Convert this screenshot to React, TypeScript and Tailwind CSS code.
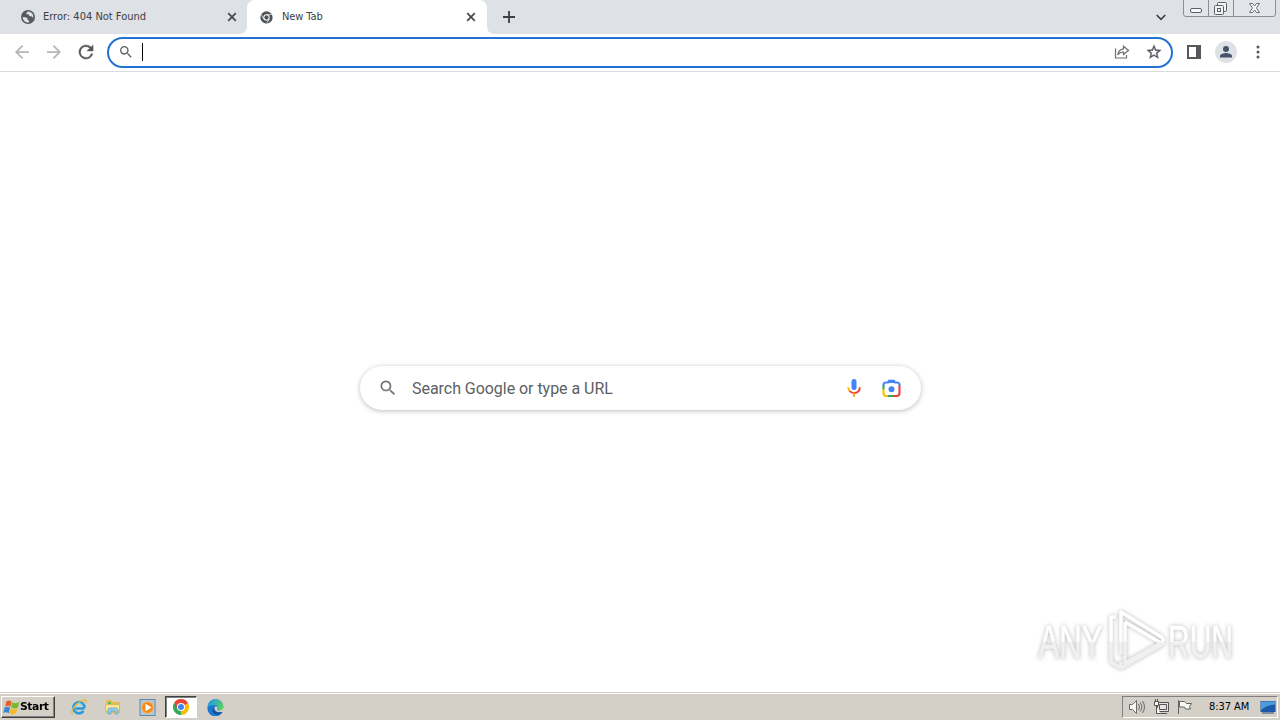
import type { ReactNode } from "react";

function MagnifierIcon({ size, color = "#5f6368" }: { size: number; color?: string }) {
  return (
    <svg width={size} height={size} viewBox="0 0 24 24" fill={color}>
      <path d="M15.5 14h-.79l-.28-.27A6.47 6.47 0 0 0 16 9.5 6.5 6.5 0 1 0 9.5 16c1.61 0 3.09-.59 4.23-1.57l.27.28v.79l5 4.99L20.49 19l-4.99-5zm-6 0C7.01 14 5 11.99 5 9.5S7.01 5 9.5 5 14 7.01 14 9.5 11.99 14 9.5 14z" />
    </svg>
  );
}

function CloseIcon() {
  return (
    <svg width="10" height="10" viewBox="0 0 10 10" stroke="#45484d" strokeWidth="1.7">
      <path d="M1.2 1.2l7.6 7.6M8.8 1.2L1.2 8.8" />
    </svg>
  );
}

function GlobeIcon() {
  return (
    <svg width="14" height="14" viewBox="0 0 14 14">
      <circle cx="7" cy="7" r="7" fill="#56595e" />
      <path d="M1.5 7.2c2.3-.1 4.1-.1 4.9 1 .5.8-.2 1.3.3 1.8.5.4 1.5.2 1.4 1.2l-.3 1.2A5.6 5.6 0 0 1 1.5 7.2z" fill="#dee1e6" />
      <path d="M5.2 3.8c0-1 1-1.1 1.3-2.3a5.5 5.5 0 0 1 5.9 6.4c-.8-.2-.8-1.2-1.7-1.5-.8-.3-1.6.2-2.3-.4-.7-.5-.2-1.4-1-1.7-.8-.2-2.2.5-2.2-.5z" fill="#dee1e6" />
    </svg>
  );
}

function ChromeGreyIcon() {
  return (
    <svg width="13" height="13" viewBox="0 0 14 14">
      <circle cx="7" cy="7" r="6.6" fill="#505358" />
      <circle cx="7" cy="7" r="3.4" fill="#fff" />
      <circle cx="7" cy="7" r="2.3" fill="#505358" />
      <path d="M7 3.8h5.6M4.1 8.7L1.4 4M10 8.7l-2.800 4.800" stroke="#fff" strokeWidth=".7" />
    </svg>
  );
}

function ChromeIcon() {
  return (
    <svg width="16" height="16" viewBox="0 0 48 48">
      <path d="M24 24L3.2 12A24 24 0 0 1 44.8 12z" fill="#ea4335" />
      <path d="M24 24L44.8 12A24 24 0 0 1 24 48z" fill="#fbbc05" />
      <path d="M24 24v24A24 24 0 0 1 3.2 12z" fill="#34a853" />
      <path d="M24 12h20.8L34.4 18zM13.6 30L3.2 12 13.6 18z" fill="#ea4335" />
      <path d="M34.4 30L24 48v-12z" fill="#fbbc05" />
      <circle cx="24" cy="24" r="12" fill="#fff" />
      <circle cx="24" cy="24" r="9" fill="#4285f4" />
    </svg>
  );
}

function WindowButtons() {
  return (
    <svg width="93" height="17" viewBox="0 0 93 17" fill="none">
      <path d="M.5 0v14q0 2.500 2.500 2.500h87q2.500 0 2.500-2.500V0" fill="#e2e5e9" stroke="#8b8f96" />
      <path d="M25.500 0v16M50.500 0v16" stroke="#8b8f96" />
      <rect x="7.500" y="8.500" width="11" height="4" rx="1.500" fill="#f8f8f8" stroke="#5b5f66" />
      <rect x="34.500" y="2.500" width="9" height="9" rx="1" fill="#f3f3f3" stroke="#5b5f66" />
      <rect x="31.500" y="5.500" width="9" height="9" rx="1" fill="#f3f3f3" stroke="#5b5f66" />
      <rect x="34.500" y="8.500" width="3" height="3" stroke="#5b5f66" />
      <path d="M66.500 3.500h3l2 2.500 2-2.500h3l-3 4.500 3 4.500h-3l-2-2.500-2 2.500h-3l3-4.500z" fill="#f5f5f5" stroke="#6a6e75" />
    </svg>
  );
}

function TabStrip() {
  return (
    <div className="flex h-[34px] shrink-0 bg-[#dee1e6] text-[11px] text-[#3c4043]">
      <div className="flex w-[247px] items-center pr-[10px] pl-[21px]">
        <GlobeIcon />
        <span className="ml-2 flex-1 pt-px whitespace-nowrap">Error: 404 Not Found</span>
        <CloseIcon />
      </div>
      <div className="relative flex w-[240px] items-center rounded-t-lg bg-white pr-[11px] pl-[13px]">
        <svg className="absolute bottom-0 -left-2" width="8" height="8" fill="#fff">
          <path d="M8 0v8H0q8 0 8-8z" />
        </svg>
        <svg className="absolute -right-2 bottom-0" width="8" height="8" fill="#fff">
          <path d="M0 0v8h8q-8 0-8-8z" />
        </svg>
        <ChromeGreyIcon />
        <span className="ml-[9px] flex-1 pt-px tracking-[-0.1px]">New Tab</span>
        <CloseIcon />
      </div>
      <div className="flex items-center pl-4">
        <svg width="12" height="12" viewBox="0 0 12 12" stroke="#3c4043" strokeWidth="1.8">
          <path d="M6 0v12M0 6h12" />
        </svg>
      </div>
      <div className="ml-auto flex items-center">
        <svg width="10" height="7" viewBox="0 0 10 7" fill="none" stroke="#3c4043" strokeWidth="1.7">
          <path d="M.7 1L5 5.300 9.300 1" />
        </svg>
        <div className="mr-1 ml-[17px] self-start">
          <WindowButtons />
        </div>
      </div>
    </div>
  );
}

function Toolbar() {
  return (
    <div className="flex h-[38px] shrink-0 items-center border-b border-[#dadce0] bg-white pb-px pl-[15px]">
      <svg width="14" height="14" viewBox="4 4 16 16" fill="#b4b6b9">
        <path d="M20 11H7.830l5.590-5.590L12 4l-8 8 8 8 1.410-1.410L7.830 13H20z" />
      </svg>
      <svg className="ml-[18px]" width="14" height="14" viewBox="4 4 16 16" fill="#b4b6b9">
        <path d="M12 4l-1.410 1.410L16.170 11H4v2h12.170l-5.580 5.590L12 20l8-8z" />
      </svg>
      <svg className="ml-[17px]" width="16" height="16" viewBox="3 3 18 18" fill="#54575c" stroke="#54575c" strokeWidth=".4">
        <path d="M17.650 6.350A7.960 7.960 0 0 0 12 4a8 8 0 1 0 7.730 10h-2.080A6 6 0 1 1 12 6c1.660 0 3.140.69 4.220 1.780L13 11h7V4z" />
      </svg>
      <div className="mt-px ml-[13px] flex h-[31px] w-[1066px] items-center rounded-full border-2 border-[#2272d2] bg-white pr-[9px] pb-px pl-[9px]">
        <MagnifierIcon size={16} />
        <div className="ml-2 h-[18px] w-px bg-black" />
        <svg className="ml-auto" width="16" height="16" viewBox="0 0 16 16" fill="none" stroke="#6a6d72" strokeWidth="1.2">
          <path d="M1.500 4.500v9.500h11v-3M9.500 2.300L14.500 6.500 9.500 10.500V8Q6 7.800 3.700 11 4.500 5.500 9.500 4.800z" />
        </svg>
        <svg className="ml-4" width="16" height="16" viewBox="1 1 22 22" fill="#55585d" stroke="#55585d" strokeWidth=".4">
          <path d="M22 9.240l-7.190-.62L12 2 9.190 8.630 2 9.240l5.460 4.730L5.820 21 12 17.270 18.180 21l-1.630-7.030zM12 15.400l-3.760 2.270 1-4.280-3.320-2.880 4.380-.38L12 6.100l1.710 4.040 4.380.38-3.320 2.880 1 4.280z" />
        </svg>
      </div>
      <svg className="ml-[14px]" width="14" height="14" viewBox="0 0 14 14" fill="#55585d">
        <path d="M0 0h14v14H0zM2 2v10h7V2z" fillRule="evenodd" />
      </svg>
      <svg className="ml-[14px]" width="22" height="22" viewBox="0 0 22 22">
        <circle cx="11" cy="11" r="11" fill="#dee1e6" />
        <circle cx="11" cy="8" r="3" fill="#46516a" />
        <path d="M5 16.500v-1.500c0-2 4-3 6-3s6 1 6 3v1.500z" fill="#46516a" />
      </svg>
      <svg className="ml-[19px]" width="4" height="14" viewBox="0 0 4 14" fill="#55585d">
        <circle cx="2" cy="2" r="1.500" />
        <circle cx="2" cy="7" r="1.500" />
        <circle cx="2" cy="12" r="1.500" />
      </svg>
    </div>
  );
}

function SearchBox() {
  return (
    <div className="mt-[294px] flex h-11 w-[561px] items-center rounded-full bg-white pr-5 pl-[18px] shadow-[0_1px_5px_rgba(32,33,36,0.3)]">
      <MagnifierIcon size={20} color="#707378" />
      <span className="mt-[2px] ml-[14.5px] flex-1 font-[Roboto,sans-serif] text-[16px] tracking-[-0.04px] text-[#5c5f63]">Search Google or type a URL</span>
      <svg width="14" height="20" viewBox="0 0 14 20" fill="none" strokeWidth="1.900">
        <rect x="4.500" y="1" width="5" height="11" rx="2.500" fill="#4285f4" />
        <path d="M1.200 9.300q0 2.700 1.800 4.200" stroke="#fbbc04" />
        <path d="M2.700 13.200Q4.500 15 7 15" stroke="#ea4335" />
        <path d="M7 15q5.800 0 5.800-5.700" stroke="#ea4335" />
        <path d="M7 14.500v4.200" stroke="#e9a50b" />
      </svg>
      <svg className="ml-[21px]" width="19" height="19" viewBox="0 0 19 19" fill="none" strokeWidth="2.100">
        <path d="M1.500 7V6q0-2.500 2.500-2.500h2l1-1.700h5l1 1.700h2q2.500 0 2.500 2.500v1" stroke="#4285f4" />
        <path d="M6 3h7" stroke="#4285f4" />
        <path d="M17.500 6.500V14q0 3-3 3H11" stroke="#ea4335" />
        <path d="M1.500 6.500v4" stroke="#34a853" />
        <path d="M1.500 10v4q0 3 3 3H7" stroke="#fbbc04" />
        <path d="M6 17h6" stroke="#34a853" />
        <circle cx="9.500" cy="10.200" r="3" fill="#4285f4" />
      </svg>
    </div>
  );
}

function Watermark() {
  return (
    <svg className="absolute right-0 bottom-[16px] drop-shadow-[0_0_2px_rgba(0,0,0,0.28)]" width="246" height="70" viewBox="0 0 246 70">
      <defs>
        <linearGradient id="wm" x1="0" y1="0" x2="0" y2="70" gradientUnits="userSpaceOnUse">
          <stop offset="0.500" stopColor="#ffffff" />
          <stop offset="0.520" stopColor="#f0f0f0" />
        </linearGradient>
      </defs>
      <g fill="url(#wm)" stroke="url(#wm)" strokeWidth=".6" fontFamily="'Liberation Sans Narrow', 'Liberation Sans', sans-serif" fontSize="46">
        <text x="4.500" y="52" textLength="64" lengthAdjust="spacingAndGlyphs">ANY</text>
        <text x="134" y="52" textLength="65" lengthAdjust="spacingAndGlyphs">RUN</text>
      </g>
      <g fill="none" stroke="url(#wm)" strokeWidth="3.500" strokeLinejoin="round">
        <path d="M87 49V6l42 26M91 16l36 21-36 20V16M87 62l42-24v-6M87 56v6M82 11h-5v45l10 6" />
      </g>
    </svg>
  );
}

function IeIcon() {
  return (
    <svg width="18" height="18" viewBox="0 0 18 18" fill="none">
      <path d="M14.500 10.500H5.200M14.500 10A5.600 5.600 0 1 0 13.500 13" stroke="#279cdd" strokeWidth="2.600" />
      <path d="M5 8.500a4.500 4.500 0 0 1 8-1" stroke="#7bd1f4" />
      <path d="M3 16c-4-1 2-10 8-13 4-2 6-1 5 2" stroke="#e6b936" strokeWidth="1.200" />
    </svg>
  );
}

function ExplorerIcon() {
  return (
    <svg width="18" height="18" viewBox="0 0 18 18">
      <path d="M2 3l1-1h5l1 2h7v11H2z" fill="#e4bd51" />
      <path d="M4 4h3v3H4z" fill="#61b65b" />
      <path d="M1.500 6.500h14v7h-14z" fill="#f8e796" stroke="#d9b95a" />
      <path d="M4 16v-4q0-2 2-2h6q2 0 2 2v4h-3v-3H7v3z" fill="#91cce7" stroke="#60a4c6" strokeWidth=".7" />
    </svg>
  );
}

function MediaPlayerIcon() {
  return (
    <svg width="17" height="17" viewBox="0 0 17 17">
      <rect x="1" y=".5" width="15" height="16" fill="#acc8de" stroke="#6487a4" />
      <circle cx="8.500" cy="8.500" r="6" fill="#f38b1c" stroke="#f9c276" />
      <path d="M6.500 4.800v7.400l6-3.700z" fill="#fff" />
    </svg>
  );
}

function EdgeIcon() {
  return (
    <svg width="17" height="17" viewBox="0 0 17 17">
      <defs>
        <linearGradient id="edge" x1="0" y1="0" x2="1" y2="0.500">
          <stop offset="0.200" stopColor="#229ddc" />
          <stop offset="1" stopColor="#58cf69" />
        </linearGradient>
      </defs>
      <path d="M.5 8.500a8 8 0 0 1 16 0l-6 1.500 5 3.200A8 8 0 0 1 .5 8.500z" fill="#1b78cc" />
      <path d="M.5 8.500a8 8 0 0 1 16-1c.2 3-2.500 4.200-5 3.800-1.800-.3-1.500-1-1-1.800.8-1.500-.3-3.500-2.700-3.500C4.500 6 1 7 .5 8.500z" fill="url(#edge)" />
      <path d="M6.800 8c-1 4 3 6.500 8.500 5.200-.7.900-1.800 1.800-3 2.300C8 16.500 3 12.500 6.800 8z" fill="#124f98" />
      <path d="M7.600 8.300c.3-1.300 2.900-1.200 2.900.4 0 1-1 1.300-.2 2.200 1.200 1 3.500 1 5.500 0l-.8 1.700c-4 1.500-8-.5-7.400-4.300z" fill="#d4d0c8" />
    </svg>
  );
}

function TaskButton({ children }: { children: ReactNode }) {
  return <div className="flex h-[22px] w-[34px] items-center justify-center">{children}</div>;
}

function Taskbar() {
  return (
    <div className="flex h-[27px] shrink-0 items-center border-t border-white bg-[#d4d0c8] pr-[2px] pl-px text-[11px] text-black">
      <div className="flex h-[22px] w-[54px] items-center border border-t-white border-r-[#404040] border-b-[#404040] border-l-white pl-px font-bold shadow-[inset_-1px_-1px_#808080]">
        <svg className="shrink-0" width="17" height="17" viewBox="0 0 16 16">
          <path d="M3 2.500q3-2 5 0L7 7.500q-2-2-5-.5z" fill="#e85c2c" />
          <path d="M8.500 3q3.500 2 7-.3L14 7.900q-3 2-6.200.1z" fill="#78b82f" />
          <path d="M1.500 8q3-1.700 5.200.2l-1.300 5.300q-2-2-5.200-.5z" fill="#3b87d1" />
          <path d="M7.400 8.700q3 2 6.400-.2l-1.500 5q-3 2-6.300.2z" fill="#f3bd26" />
        </svg>
        <span className="origin-left scale-x-[1.09] tracking-[-0.4px]">Start</span>
      </div>
      <div className="ml-[7px] flex items-center">
        <TaskButton><IeIcon /></TaskButton>
        <TaskButton><ExplorerIcon /></TaskButton>
        <TaskButton><MediaPlayerIcon /></TaskButton>
        <div className="mx-px flex h-[22px] w-8 items-center justify-center border border-t-[#404040] border-r-white border-b-white border-l-[#404040] bg-white shadow-[inset_1px_1px_#808080]">
          <ChromeIcon />
        </div>
        <TaskButton><EdgeIcon /></TaskButton>
      </div>
      <div className="ml-auto flex h-[22px] w-[156px] items-center border border-t-[#808080] border-r-white border-b-white border-l-[#808080] pl-[5px]">
        <svg width="18" height="16" viewBox="0 0 18 16" fill="none" stroke="#6b6b68">
          <path d="M1.500 5.500h3l4-4v13l-4-4h-3z" fill="#f7f7f3" />
          <path d="M10.500 5q2 3 0 6M12.500 3.500q3 4.500 0 9M14.500 2q4 6 0 12" />
        </svg>
        <svg className="ml-[7px]" width="17" height="16" viewBox="0 0 17 16" fill="none" stroke="#555">
          <path d="M4.500 3.500h11v9h-11zM6.500 5.500h7v5h-7zM7 14.500h7" fill="#e3e2de" />
          <path d="M1.500 2.500h4v4h-4zM2.500 0v2M4.500 0v2M3.500 7v7.500h4" fill="#f7f7f3" />
        </svg>
        <svg className="ml-[7px]" width="16" height="16" viewBox="0 0 16 16" fill="#f7f7f3" stroke="#62625f">
          <path d="M1.500 1v14M2.500 2.500h5l2 2h5l-2 3 1 2.500h-5l-1-2h-5z" />
        </svg>
        <span className="ml-4 w-[42px] tracking-[-0.05px] whitespace-nowrap">8:37 AM</span>
        <svg className="ml-[9px]" width="16" height="15" viewBox="0 0 16 15">
          <rect x=".5" y="1" width="15" height="11" fill="#1b58a7" />
          <path d="M1 1.500h14v3Q7 5 1 10z" fill="#4c9cdb" />
          <path d="M2 13h12" stroke="#2b4d73" />
        </svg>
      </div>
    </div>
  );
}

export default function App() {
  return (
    <div className="flex h-[720px] w-[1280px] flex-col overflow-hidden bg-white font-[Tahoma,'DejaVu_Sans_Condensed',sans-serif]">
      <TabStrip />
      <Toolbar />
      <main className="relative flex h-[620px] shrink-0 items-start justify-center">
        <SearchBox />
        <Watermark />
      </main>
      <div className="h-px shrink-0 bg-[#d4d0c8]" />
      <Taskbar />
    </div>
  );
}
